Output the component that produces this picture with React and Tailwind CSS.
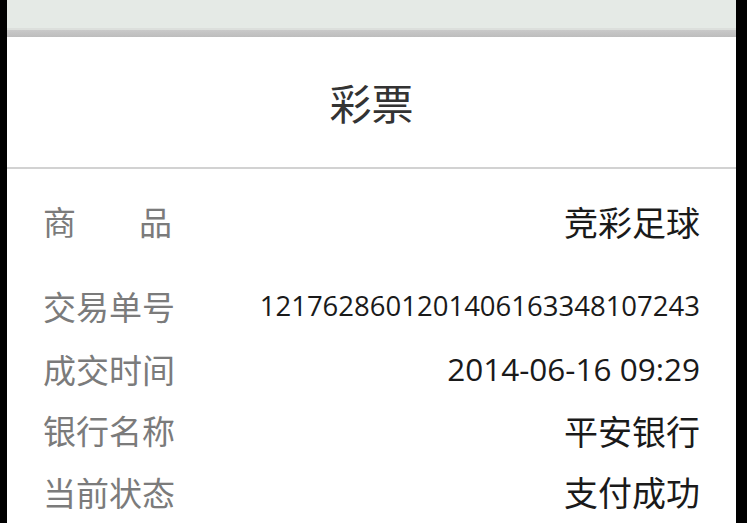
import React from "react";

const rows = [
  { label: "商品", value: "竞彩足球", h: "h-[105px]", spread: true, cjk: true },
  { label: "交易单号", value: "1217628601201406163348107243", h: "h-[64px]", size: "text-[27.5px]" },
  { label: "成交时间", value: "2014-06-16 09:29", h: "h-[62px]", size: "text-[31.5px]" },
  { label: "银行名称", value: "平安银行", h: "h-[61px]", cjk: true },
  { label: "当前状态", value: "支付成功", h: "h-[62px]", cjk: true },
];

function Label({ text, spread }) {
  if (spread) {
    return (
      <div className="flex w-[129px] justify-between">
        {text.split("").map((c) => (
          <span key={c}>{c}</span>
        ))}
      </div>
    );
  }
  return <span>{text}</span>;
}

export default function App() {
  return (
    <div className="flex h-[523px] w-[747px] overflow-hidden bg-black font-['Open_Sans','Noto_Sans_CJK_SC',sans-serif]">
      <div className="ml-[7px] mr-[11px] flex flex-1 flex-col bg-white">
        {/* top bar */}
        <div className="h-[28px] bg-[#e5eae6]" />
        <div className="h-[3px] bg-[#dcdfdc]" />
        <div className="h-[7px] bg-gradient-to-b from-[#c9c9c9] to-[#bdbdbd]" />

        {/* title */}
        <div className="flex h-[134px] items-center justify-center border-b-2 border-[#d2d2d2]">
          <h1 className="text-[42px] font-normal leading-none text-[#333] font-['Noto_Sans_CJK_SC',sans-serif]">彩票</h1>
        </div>

        {/* details */}
        <div className="flex flex-col px-[36px]">
          {rows.map((r) => (
            <div key={r.label} className={`flex items-center justify-between ${r.h}`}>
              <div className="text-[33px] leading-none text-[#7b7b7b] font-['Noto_Sans_CJK_SC',sans-serif]">
                <Label text={r.label} spread={r.spread} />
              </div>
              <div
                className={
                  r.cjk
                    ? "text-[34px] leading-none text-[#1a1a1a] font-['Noto_Sans_CJK_SC',sans-serif]"
                    : `${r.size} leading-none text-[#1a1a1a]`
                }
              >
                {r.value}
              </div>
            </div>
          ))}
        </div>
      </div>
    </div>
  );
}
